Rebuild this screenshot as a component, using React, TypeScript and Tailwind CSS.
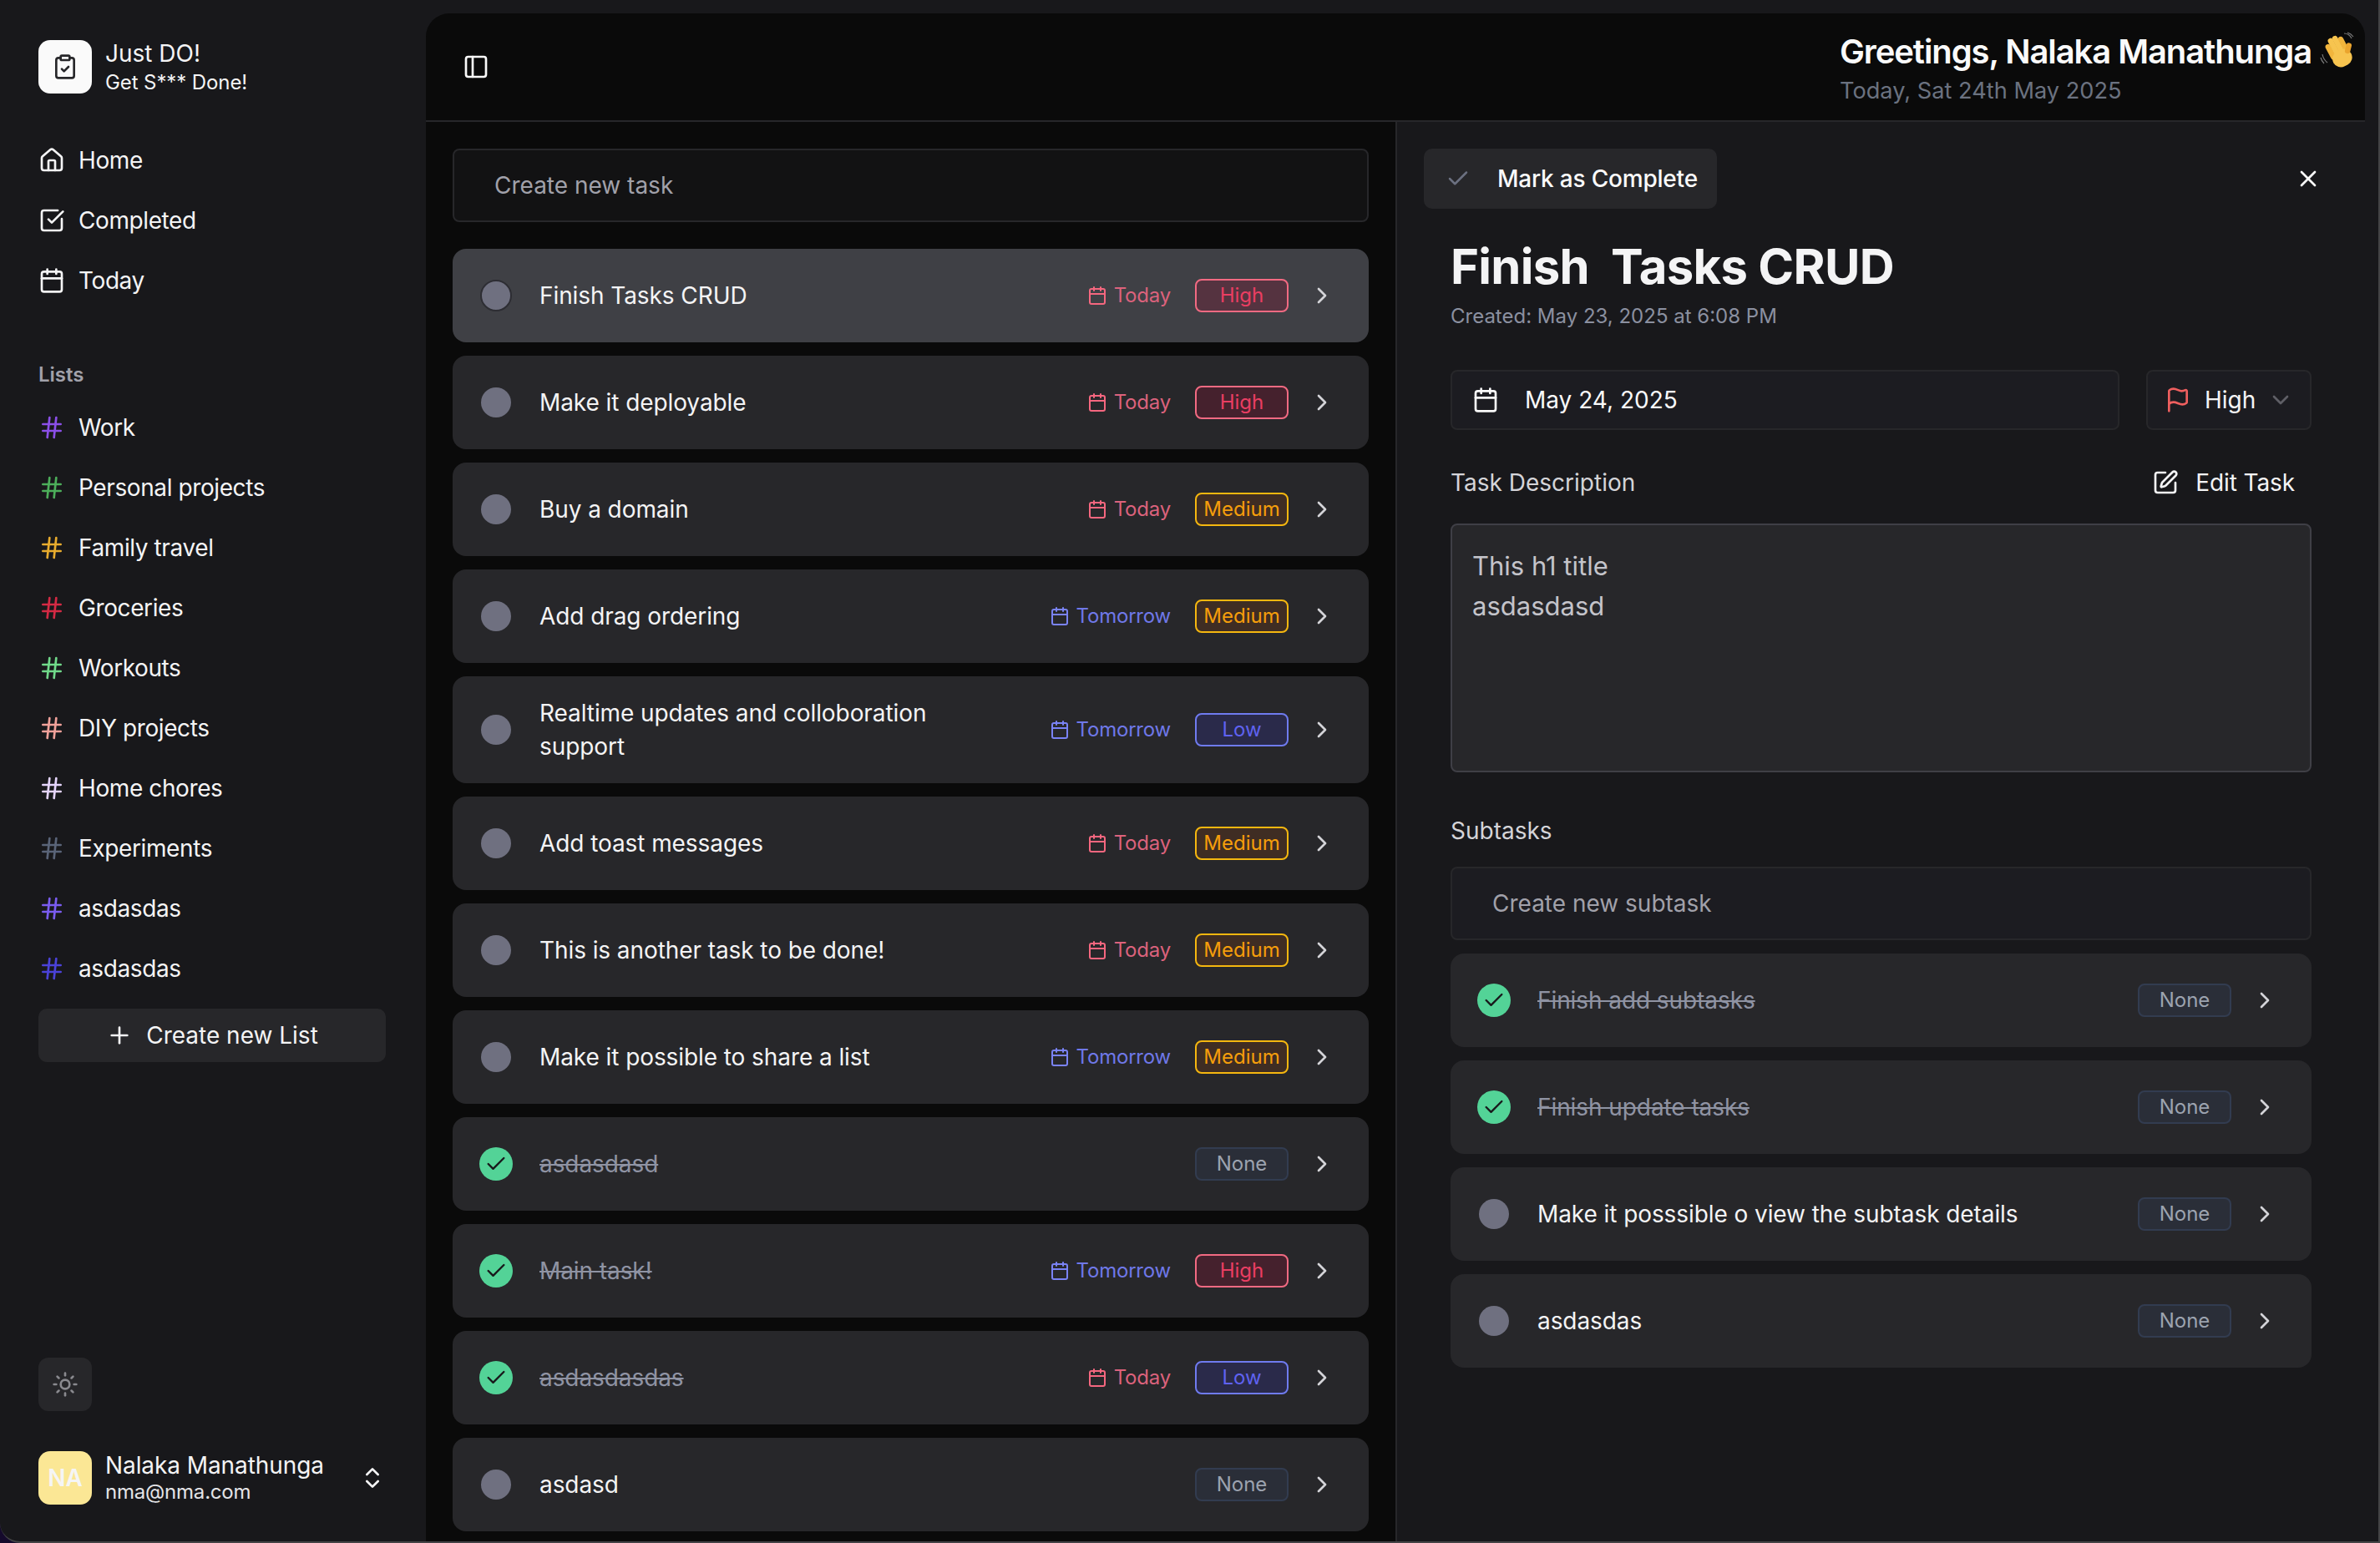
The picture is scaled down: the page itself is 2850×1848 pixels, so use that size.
import React from "react";
import {
  House, SquareCheckBig, Calendar, Hash, Plus, Sun, ChevronsUpDown, ClipboardCheck,
  PanelLeft, ChevronRight, ChevronDown, Check, X, Flag, SquarePen,
} from "lucide-react";

type Pri = "High" | "Medium" | "Low" | "None";
type Task = { t: string; d?: "Today" | "Tomorrow"; p: Pri; done?: boolean; sel?: boolean };

const tasks: Task[] = [
  { t: "Finish Tasks CRUD", d: "Today", p: "High", sel: true },
  { t: "Make it deployable", d: "Today", p: "High" },
  { t: "Buy a domain", d: "Today", p: "Medium" },
  { t: "Add drag ordering", d: "Tomorrow", p: "Medium" },
  { t: "Realtime updates and colloboration support", d: "Tomorrow", p: "Low" },
  { t: "Add toast messages", d: "Today", p: "Medium" },
  { t: "This is another task to be done!", d: "Today", p: "Medium" },
  { t: "Make it possible to share a list", d: "Tomorrow", p: "Medium" },
  { t: "asdasdasd", p: "None", done: true },
  { t: "Main task!", d: "Tomorrow", p: "High", done: true },
  { t: "asdasdasdas", d: "Today", p: "Low", done: true },
  { t: "asdasd", p: "None" },
];

const subtasks: Task[] = [
  { t: "Finish add subtasks", p: "None", done: true },
  { t: "Finish update tasks", p: "None", done: true },
  { t: "Make it posssible o view the subtask details", p: "None" },
  { t: "asdasdas", p: "None" },
];

const lists = [
  { n: "Work", c: "text-[#8b4fe8]" },
  { n: "Personal projects", c: "text-[#4cae5a]" },
  { n: "Family travel", c: "text-[#e8ac2e]" },
  { n: "Groceries", c: "text-[#d42a44]" },
  { n: "Workouts", c: "text-[#70d98a]" },
  { n: "DIY projects", c: "text-[#f0a19a]" },
  { n: "Home chores", c: "text-[#e4d4fb]" },
  { n: "Experiments", c: "text-[#5a6478]" },
  { n: "asdasdas", c: "text-[#7a5cf0]" },
  { n: "asdasdas", c: "text-[#4b42d8]" },
];

const badge: Record<Pri, string> = {
  High: "border-[#f26a82] text-[#ea3e62] bg-[#45212d]",
  Medium: "border-[#f5b70f] text-[#f59e0b] bg-[#3f2d23]",
  Low: "border-[#6f7bf0] text-[#5f62f0] bg-[#2a2a4a]",
  None: "border-[#323c50] text-[#9ca3af] bg-[#2a2e38]",
};

function Badge({ p, sel }: { p: Pri; sel?: boolean }) {
  return (
    <span
      className={`flex h-[40px] w-[112px] shrink-0 items-center justify-center rounded-[8px] border-2 text-[24px] leading-none ${
        sel ? "border-[#f26a82] bg-[#553340] text-[#ea3e62]" : badge[p]
      }`}
    >
      {p}
    </span>
  );
}

function Row({ task, sub }: { task: Task; sub?: boolean }) {
  const { t, d, p, done, sel } = task;
  return (
    <div
      className={`flex min-h-[112px] shrink-0 items-center rounded-[16px] py-[24px] pl-[32px] pr-[40px] ${
        sel ? "bg-[#3f4045]" : "bg-[#27272a]"
      }`}
    >
      <span className="flex h-[40px] w-[40px] shrink-0 items-center justify-center">
        {done ? (
          <span className="flex h-[40px] w-[40px] items-center justify-center rounded-full bg-[#53d397]">
            <Check size={28} className="text-[#18181b]" />
          </span>
        ) : sel ? (
          <span className="h-[38px] w-[38px] rounded-full border-2 border-[#2d2d33] bg-[#6f7080]" />
        ) : (
          <span className="h-[36px] w-[36px] rounded-full bg-[#6f7080]" />
        )}
      </span>
      <span
        className={`ml-[32px] text-[28px] leading-[40px] tracking-[-0.08px] ${sub ? "" : "max-w-[540px]"} ${
          done ? "text-[#8f93a3] line-through" : "text-[#f4f4f5]"
        }`}
      >
        {t}
      </span>
      <span className="flex-1" />
      {d && (
        <span
          className={`mr-[29px] flex items-center gap-[8px] text-[24px] tracking-[-0.2px] ${
            d === "Today" ? "text-[#dc627c]" : "text-[#6f78e8]"
          }`}
        >
          <Calendar size={24} className={d === "Today" ? "text-[#f5677f]" : "text-[#7a83f5]"} />
          {d}
        </span>
      )}
      <Badge p={p} sel={sel} />
      <ChevronRight size={32} className="ml-[24px] shrink-0 text-[#d4d4d8]" />
    </div>
  );
}

function Wave() {
  return (
    <svg width="44" height="44" viewBox="0 0 44 44" className="-mt-[4px] ml-[10px] shrink-0">
      <g transform="rotate(-28 24 24)">
        <rect x="11" y="9" width="6.5" height="20" rx="3.2" fill="#f2b53c" />
        <rect x="17" y="4" width="6.5" height="24" rx="3.2" fill="#f7c44f" />
        <rect x="23" y="4" width="6.5" height="24" rx="3.2" fill="#f7c44f" />
        <rect x="29" y="8" width="6" height="20" rx="3" fill="#f2b53c" />
        <rect x="11" y="22" width="24" height="20" rx="10" fill="#f7c44f" />
        <rect x="30" y="24" width="13" height="6.5" rx="3.2" transform="rotate(-48 33 28)" fill="#eba52e" />
      </g>
      <path d="M3 27q1 6 6 10M1 31q1 4 4 7M29 2q6 0 9 6M33 1q4 1 7 5" fill="none" stroke="#7a7a7a" strokeWidth="1.2" />
    </svg>
  );
}

export default function App() {
  return (
    <div className="h-[1848px] w-[2850px] overflow-hidden bg-[#150a2c] [font-family:Inter,'Liberation_Sans',sans-serif]">
      <div className="flex h-[1848px] overflow-hidden rounded-bl-[24px] border-b-2 border-r-2 border-[#434345] bg-[#18181b] pl-0">
        {/* Sidebar */}
        <aside className="flex w-[510px] shrink-0 flex-col px-[46px] pt-[48px] pb-[44px] text-[#f4f4f5]">
          <div className="flex h-[64px] items-center gap-[16px]">
            <span className="flex h-[64px] w-[64px] items-center justify-center rounded-[14px] bg-[#fafafa]">
              <ClipboardCheck size={32} className="text-[#27272a]" />
            </span>
            <div>
              <div className="text-[28px] leading-[34px]">Just DO!</div>
              <div className="pt-[3px] text-[24px] leading-[30px] tracking-[-0.1px]">Get S*** Done!</div>
            </div>
          </div>

          <nav className="mt-[44px] flex flex-col">
            {[
              { n: "Home", I: House },
              { n: "Completed", I: SquareCheckBig },
              { n: "Today", I: Calendar },
            ].map(({ n, I }) => (
              <div key={n} className="flex h-[72px] items-center gap-[16px] text-[28px] tracking-[-0.4px]">
                <I size={32} />
                {n}
              </div>
            ))}
          </nav>

          <div className="mt-[61px] h-[32px] text-[24px] font-semibold leading-[32px] text-[#a1a1aa]">Lists</div>
          <div className="mt-[11px] flex flex-col">
            {lists.map((l, i) => (
              <div key={i} className="flex h-[72px] items-center gap-[16px] text-[28px] tracking-[-0.4px]">
                <Hash size={32} className={l.c} />
                {l.n}
              </div>
            ))}
          </div>
          <div className="mt-[12px] flex h-[64px] w-[416px] items-center justify-center gap-[16px] rounded-[10px] bg-[#27272a] text-[28px]">
            <Plus size={32} />
            Create new List
          </div>

          <div className="flex-1" />

          <div className="flex h-[64px] w-[64px] items-center justify-center rounded-[12px] bg-[#27272a]">
            <Sun size={32} className="text-[#8a8a8f]" />
          </div>
          <div className="mt-[48px] flex h-[64px] items-center gap-[16px] pr-[2px]">
            <span className="flex h-[64px] w-[64px] items-center justify-center rounded-[14px] bg-[#fbe795] text-[28px] font-semibold text-[#f5f5f5]">
              NA
            </span>
            <div className="flex-1">
              <div className="text-[28px] leading-[34px] tracking-[-0.08px]">Nalaka Manathunga</div>
              <div className="text-[24px] leading-[30px] tracking-[-0.2px] text-[#e4e4e7]">nma@nma.com</div>
            </div>
            <ChevronsUpDown size={32} />
          </div>
        </aside>

        {/* Main */}
        <main className="mt-[16px] flex h-[1832px] w-[2322px] shrink-0 flex-col overflow-hidden rounded-t-[28px] bg-[#0a0a0a]">
          <header className="flex h-[130px] shrink-0 items-center justify-between border-b-2 border-[#27272a] pl-[44px] pr-[14px]">
            <PanelLeft size={32} className="text-[#fafafa]" />
            <div className="w-[615px] pt-[3px]">
              <div className="flex h-[52px] items-center whitespace-nowrap text-[40px] font-semibold tracking-[-1.1px] text-[#fafafa]">
                Greetings, Nalaka Manathunga
                <Wave />
              </div>
              <div className="mt-[3px] whitespace-nowrap text-[27.2px] leading-[36px] text-[#6b7280]">
                Today, Sat 24th May 2025
              </div>
            </div>
          </header>

          <div className="flex min-h-0 flex-1">
            {/* Task list */}
            <section className="flex w-[1161px] shrink-0 flex-col gap-[16px] overflow-hidden px-[32px] pt-[32px]">
              <div className="mb-[16px] flex h-[88px] shrink-0 items-center rounded-[8px] border-2 border-[#27272a] bg-[#121213] pl-[48px] text-[28px] text-[#a1a1aa]">
                Create new task
              </div>
              {tasks.map((t, i) => (
                <Row key={i} task={t} />
              ))}
            </section>

            {/* Detail */}
            <section className="flex-1 overflow-hidden border-l-2 border-[#27272a] bg-[#18181b] pt-[32px]">
              <div className="flex h-[72px] items-center justify-between pl-[32px] pr-[52px]">
                <div className="flex h-[72px] w-[351px] items-center gap-[32px] rounded-[10px] bg-[#27272a] pl-[26px] text-[28px] font-medium tracking-[-0.2px] text-[#fafafa]">
                  <Check size={30} className="text-[#6b7080]" />
                  Mark as Complete
                </div>
                <X size={32} className="text-[#fafafa]" />
              </div>

              <div className="px-[64px]">
                <h1 className="mt-[33px] whitespace-pre text-[58px] font-bold leading-[72px] tracking-[-0.7px] text-[#f4f4f5]">
                  {"Finish  Tasks CRUD"}
                </h1>
                <div className="mt-[8px] text-[24px] leading-[32px] text-[#8b90a0]">
                  Created: May 23, 2025 at 6:08 PM
                </div>

                <div className="mt-[48px] flex gap-[32px]">
                  <div className="flex h-[72px] flex-1 items-center gap-[31px] rounded-[8px] border-2 border-[#27272a] bg-[#1c1c21] pl-[24px] text-[28px] text-[#fafafa]">
                    <Calendar size={32} />
                    May 24, 2025
                  </div>
                  <div className="flex h-[72px] w-[198px] items-center gap-[16px] rounded-[8px] border-2 border-[#27272a] bg-[#1c1c21] pl-[20px] text-[28px] text-[#f4f4f5]">
                    <Flag size={32} className="text-[#ef5f5f]" />
                    High
                    <ChevronDown size={32} className="-ml-[2px] text-[#5f5f66]" />
                  </div>
                </div>

                <div className="mt-[33px] flex h-[60px] items-center justify-between">
                  <span className="text-[28px] text-[#d4d4d8]">Task Description</span>
                  <span className="flex items-center gap-[20px] pr-[20px] text-[28px] tracking-[-0.1px] text-[#f4f4f5]">
                    <SquarePen size={32} />
                    Edit Task
                  </span>
                </div>

                <div className="mt-[19px] h-[298px] rounded-[8px] border-2 border-[#3f3f46] bg-[#27272a] px-[24px] pb-[24px] pt-[25px] text-[31px] leading-[48px] text-[#c4c4ca]">
                  <p>This h1 title</p>
                  <p>asdasdasd</p>
                </div>

                <div className="mt-[50px] text-[28px] leading-[40px] text-[#d4d4d8]">Subtasks</div>
                <div className="mt-[23px] flex h-[88px] items-center rounded-[8px] border-2 border-[#27272a] bg-[#1c1c21] pl-[48px] text-[28px] text-[#a1a1aa]">
                  Create new subtask
                </div>
                <div className="mt-[16px] flex flex-col gap-[16px]">
                  {subtasks.map((t, i) => (
                    <Row key={i} task={t} sub />
                  ))}
                </div>
              </div>
            </section>
          </div>
        </main>
      </div>
    </div>
  );
}
